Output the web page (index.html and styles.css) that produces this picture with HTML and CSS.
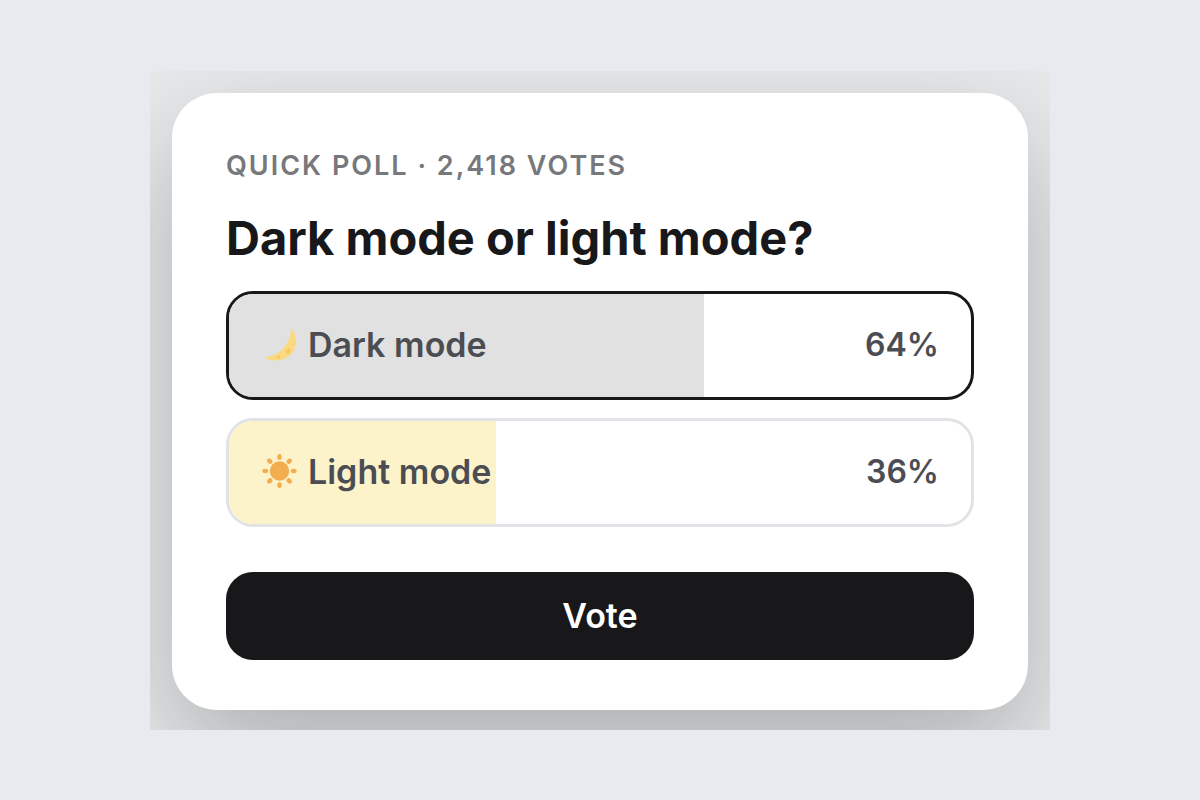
FILE: index.html
```html
<!DOCTYPE html>
<html lang="en">
<head>
<meta charset="utf-8">
<meta name="viewport" content="width=device-width, initial-scale=1">
<title>Quick poll</title>
<link rel="stylesheet" href="styles.css">
</head>
<body>
<main class="stage">
  <form class="card">
    <p class="kicker">Quick poll · 2,418 votes</p>
    <h1 class="question">Dark mode or light mode?</h1>
    <div class="options" role="radiogroup" aria-label="Dark mode or light mode?">
      <label class="option option-dark">
        <input class="choice" type="radio" name="mode" value="dark" checked>
        <span class="fill" style="width: 64%"></span>
        <svg class="icon" viewBox="0 0 36 36" aria-hidden="true">
          <path d="M31.500 2.500C37.500 11 36 23 28 29C21 34.500 11.500 34.500 5.500 31.500C4.200 30.700 4.500 29.700 6 29.700C18 28.500 29 18 30 3.500C30 2 31 1.600 31.500 2.500Z" fill="#fbd980"/>
          <circle cx="27.500" cy="24" r="2.600" fill="#f7ca68"/>
          <circle cx="17.500" cy="30" r="1.700" fill="#f7ca68"/>
          <circle cx="32.500" cy="17" r="1" fill="#f7ca68"/>
        </svg>
        <span class="name">Dark mode</span>
        <span class="share">64%</span>
      </label>
      <label class="option option-light">
        <input class="choice" type="radio" name="mode" value="light">
        <span class="fill" style="width: 36%"></span>
        <svg class="icon" viewBox="0 0 36 36" aria-hidden="true">
          <g fill="#f1ad4e">
            <circle cx="18.500" cy="17" r="9.700"/>
            <ellipse cx="18.500" cy="2.900" rx="2.200" ry="2.900"/>
            <ellipse cx="18.500" cy="31.100" rx="2.200" ry="2.900"/>
            <ellipse cx="4.300" cy="17" rx="2.900" ry="2.200"/>
            <ellipse cx="32.700" cy="17" rx="2.900" ry="2.200"/>
            <ellipse cx="18.500" cy="3.200" rx="2.300" ry="3" transform="rotate(45 18.500 17)"/>
            <ellipse cx="18.500" cy="3.200" rx="2.300" ry="3" transform="rotate(135 18.500 17)"/>
            <ellipse cx="18.500" cy="3.200" rx="2.300" ry="3" transform="rotate(225 18.500 17)"/>
            <ellipse cx="18.500" cy="3.200" rx="2.300" ry="3" transform="rotate(315 18.500 17)"/>
          </g>
        </svg>
        <span class="name">Light mode</span>
        <span class="share">36%</span>
      </label>
    </div>
    <button class="vote" type="button">Vote</button>
  </form>
</main>
</body>
</html>
```
FILE: styles.css
```css
* {
  box-sizing: border-box;
}

body {
  margin: 0;
  min-height: 100vh;
  display: flex;
  align-items: center;
  justify-content: center;
  background: #e7ebf0;
  color: #18181a;
  font-family: Inter, "Liberation Sans", sans-serif;
}

.stage {
  width: 100%;
  max-width: 900px;
  padding: 22px 22px 20px;
  overflow: hidden;
  background: #e7e9eb;
}

.card {
  padding: 54px;
  padding-bottom: 50px;
  border-radius: 45px;
  background: #fff;
  box-shadow: 0 45px 112px rgba(0, 0, 0, 0.25);
}

.kicker {
  margin: 0 0 18px;
  color: #77787b;
  font-size: 27px;
  font-weight: 600;
  line-height: 38px;
  letter-spacing: 2px;
  text-transform: uppercase;
}

.question {
  margin: 0 0 18px;
  font-size: 47px;
  font-weight: 700;
  line-height: 70px;
}

.options {
  display: grid;
  gap: 18px;
  margin-bottom: 45px;
}

.option {
  position: relative;
  display: flex;
  align-items: center;
  min-height: 109px;
  padding: 0 32px;
  overflow: hidden;
  border: 3px solid #e2e3e6;
  border-radius: 27px;
  color: #4b4d52;
  font-size: 34px;
  font-weight: 600;
  line-height: 44px;
  cursor: pointer;
}

.option:has(.choice:checked) {
  border-color: #18181a;
}

.choice {
  position: absolute;
  inset: 0;
  margin: 0;
  appearance: none;
  cursor: pointer;
}

.fill {
  position: absolute;
  inset: 0 auto 0 0;
}

.option-dark .fill {
  background: #e1e1e1;
}

.option-light .fill {
  background: #fdf3cb;
}

.icon,
.name,
.share {
  position: relative;
}

.icon {
  flex: none;
  width: 36px;
  height: 36px;
  margin-right: 11px;
}

.share {
  margin-left: auto;
  font-size: 32px;
}

.vote {
  display: block;
  width: 100%;
  padding: 22px;
  border: 0;
  border-radius: 27px;
  background: #18181a;
  color: #fff;
  font: inherit;
  font-size: 34px;
  font-weight: 600;
  line-height: 44px;
  cursor: pointer;
}
```
